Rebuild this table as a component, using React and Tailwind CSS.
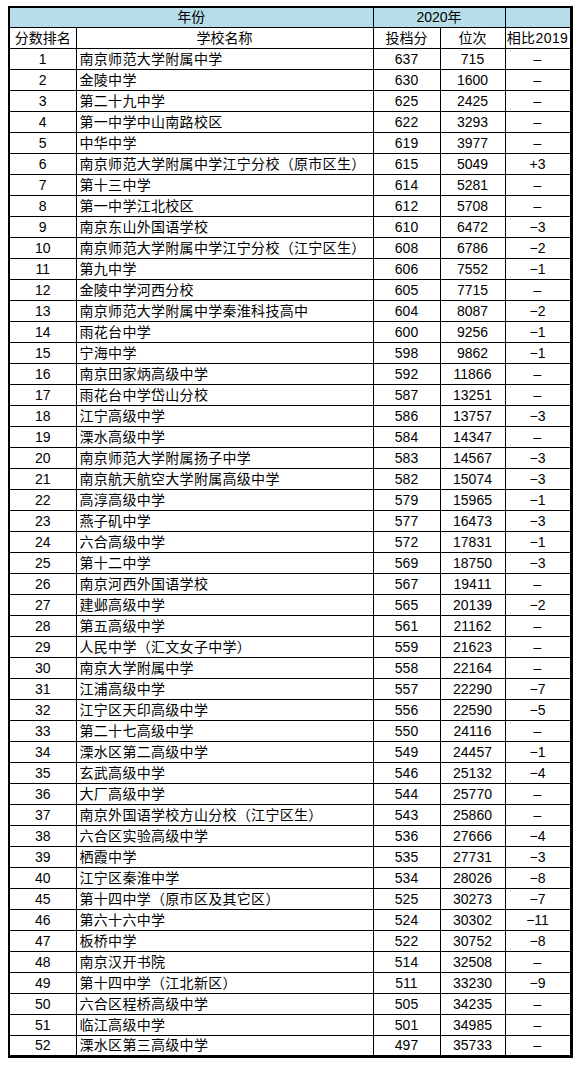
const rows = [
  [1, "南京师范大学附属中学", 637, 715, "–"],
  [2, "金陵中学", 630, 1600, "–"],
  [3, "第二十九中学", 625, 2425, "–"],
  [4, "第一中学中山南路校区", 622, 3293, "–"],
  [5, "中华中学", 619, 3977, "–"],
  [6, "南京师范大学附属中学江宁分校（原市区生）", 615, 5049, "+3"],
  [7, "第十三中学", 614, 5281, "–"],
  [8, "第一中学江北校区", 612, 5708, "–"],
  [9, "南京东山外国语学校", 610, 6472, "−3"],
  [10, "南京师范大学附属中学江宁分校（江宁区生）", 608, 6786, "−2"],
  [11, "第九中学", 606, 7552, "−1"],
  [12, "金陵中学河西分校", 605, 7715, "–"],
  [13, "南京师范大学附属中学秦淮科技高中", 604, 8087, "−2"],
  [14, "雨花台中学", 600, 9256, "−1"],
  [15, "宁海中学", 598, 9862, "−1"],
  [16, "南京田家炳高级中学", 592, 11866, "–"],
  [17, "雨花台中学岱山分校", 587, 13251, "–"],
  [18, "江宁高级中学", 586, 13757, "−3"],
  [19, "溧水高级中学", 584, 14347, "–"],
  [20, "南京师范大学附属扬子中学", 583, 14567, "−3"],
  [21, "南京航天航空大学附属高级中学", 582, 15074, "−3"],
  [22, "高淳高级中学", 579, 15965, "−1"],
  [23, "燕子矶中学", 577, 16473, "−3"],
  [24, "六合高级中学", 572, 17831, "−1"],
  [25, "第十二中学", 569, 18750, "−3"],
  [26, "南京河西外国语学校", 567, 19411, "–"],
  [27, "建邺高级中学", 565, 20139, "−2"],
  [28, "第五高级中学", 561, 21162, "–"],
  [29, "人民中学（汇文女子中学）", 559, 21623, "–"],
  [30, "南京大学附属中学", 558, 22164, "–"],
  [31, "江浦高级中学", 557, 22290, "−7"],
  [32, "江宁区天印高级中学", 556, 22590, "−5"],
  [33, "第二十七高级中学", 550, 24116, "–"],
  [34, "溧水区第二高级中学", 549, 24457, "−1"],
  [35, "玄武高级中学", 546, 25132, "−4"],
  [36, "大厂高级中学", 544, 25770, "–"],
  [37, "南京外国语学校方山分校（江宁区生）", 543, 25860, "–"],
  [38, "六合区实验高级中学", 536, 27666, "−4"],
  [39, "栖霞中学", 535, 27731, "−3"],
  [40, "江宁区秦淮中学", 534, 28026, "−8"],
  [45, "第十四中学（原市区及其它区）", 525, 30273, "−7"],
  [46, "第六十六中学", 524, 30302, "−11"],
  [47, "板桥中学", 522, 30752, "−8"],
  [48, "南京汉开书院", 514, 32508, "–"],
  [49, "第十四中学（江北新区）", 511, 33230, "−9"],
  [50, "六合区程桥高级中学", 505, 34235, "–"],
  [51, "临江高级中学", 501, 34985, "–"],
  [52, "溧水区第三高级中学", 497, 35733, "–"],
];

const cell = "border border-black p-0 align-middle";

export default function App() {
  return (
    <div className="bg-white w-[577px] h-[1065px] pl-[8px] pt-[6px] font-['Liberation_Sans','Noto_Sans_CJK_SC',sans-serif] text-[14px] leading-none text-black">
      <table className="table-fixed border-collapse border-l-2 border-t-2 border-r-[3px] border-b-[3px] border-black w-[564px]">
        <colgroup>
          <col className="w-[67px]" />
          <col className="w-[297px]" />
          <col className="w-[67px]" />
          <col className="w-[65px]" />
          <col className="w-[66px]" />
        </colgroup>
        <thead>
          <tr className="h-[20px] bg-[#b7dee8]">
            <td colSpan={2} className={`${cell} text-center`}>年份</td>
            <td colSpan={2} className={`${cell} text-center`}>2020年</td>
            <td className={cell}></td>
          </tr>
          <tr className="h-[21px]">
            <td className={`${cell} text-center`}>分数排名</td>
            <td className={`${cell} text-center`}>学校名称</td>
            <td className={`${cell} text-center`}>投档分</td>
            <td className={`${cell} text-center`}>位次</td>
            <td className={`${cell} text-center tracking-[0.4px]`}>相比2019</td>
          </tr>
        </thead>
        <tbody>
          {rows.map(([rank, name, score, pos, diff]) => (
            <tr key={rank} className="h-[21px]">
              <td className={`${cell} text-center`}>{rank}</td>
              <td className={`${cell} pl-[3px] tracking-[0.3px] whitespace-nowrap`}>{name}</td>
              <td className={`${cell} text-center`}>{score}</td>
              <td className={`${cell} text-center`}>{pos}</td>
              <td className={`${cell} text-center`}>{diff}</td>
            </tr>
          ))}
        </tbody>
      </table>
    </div>
  );
}
